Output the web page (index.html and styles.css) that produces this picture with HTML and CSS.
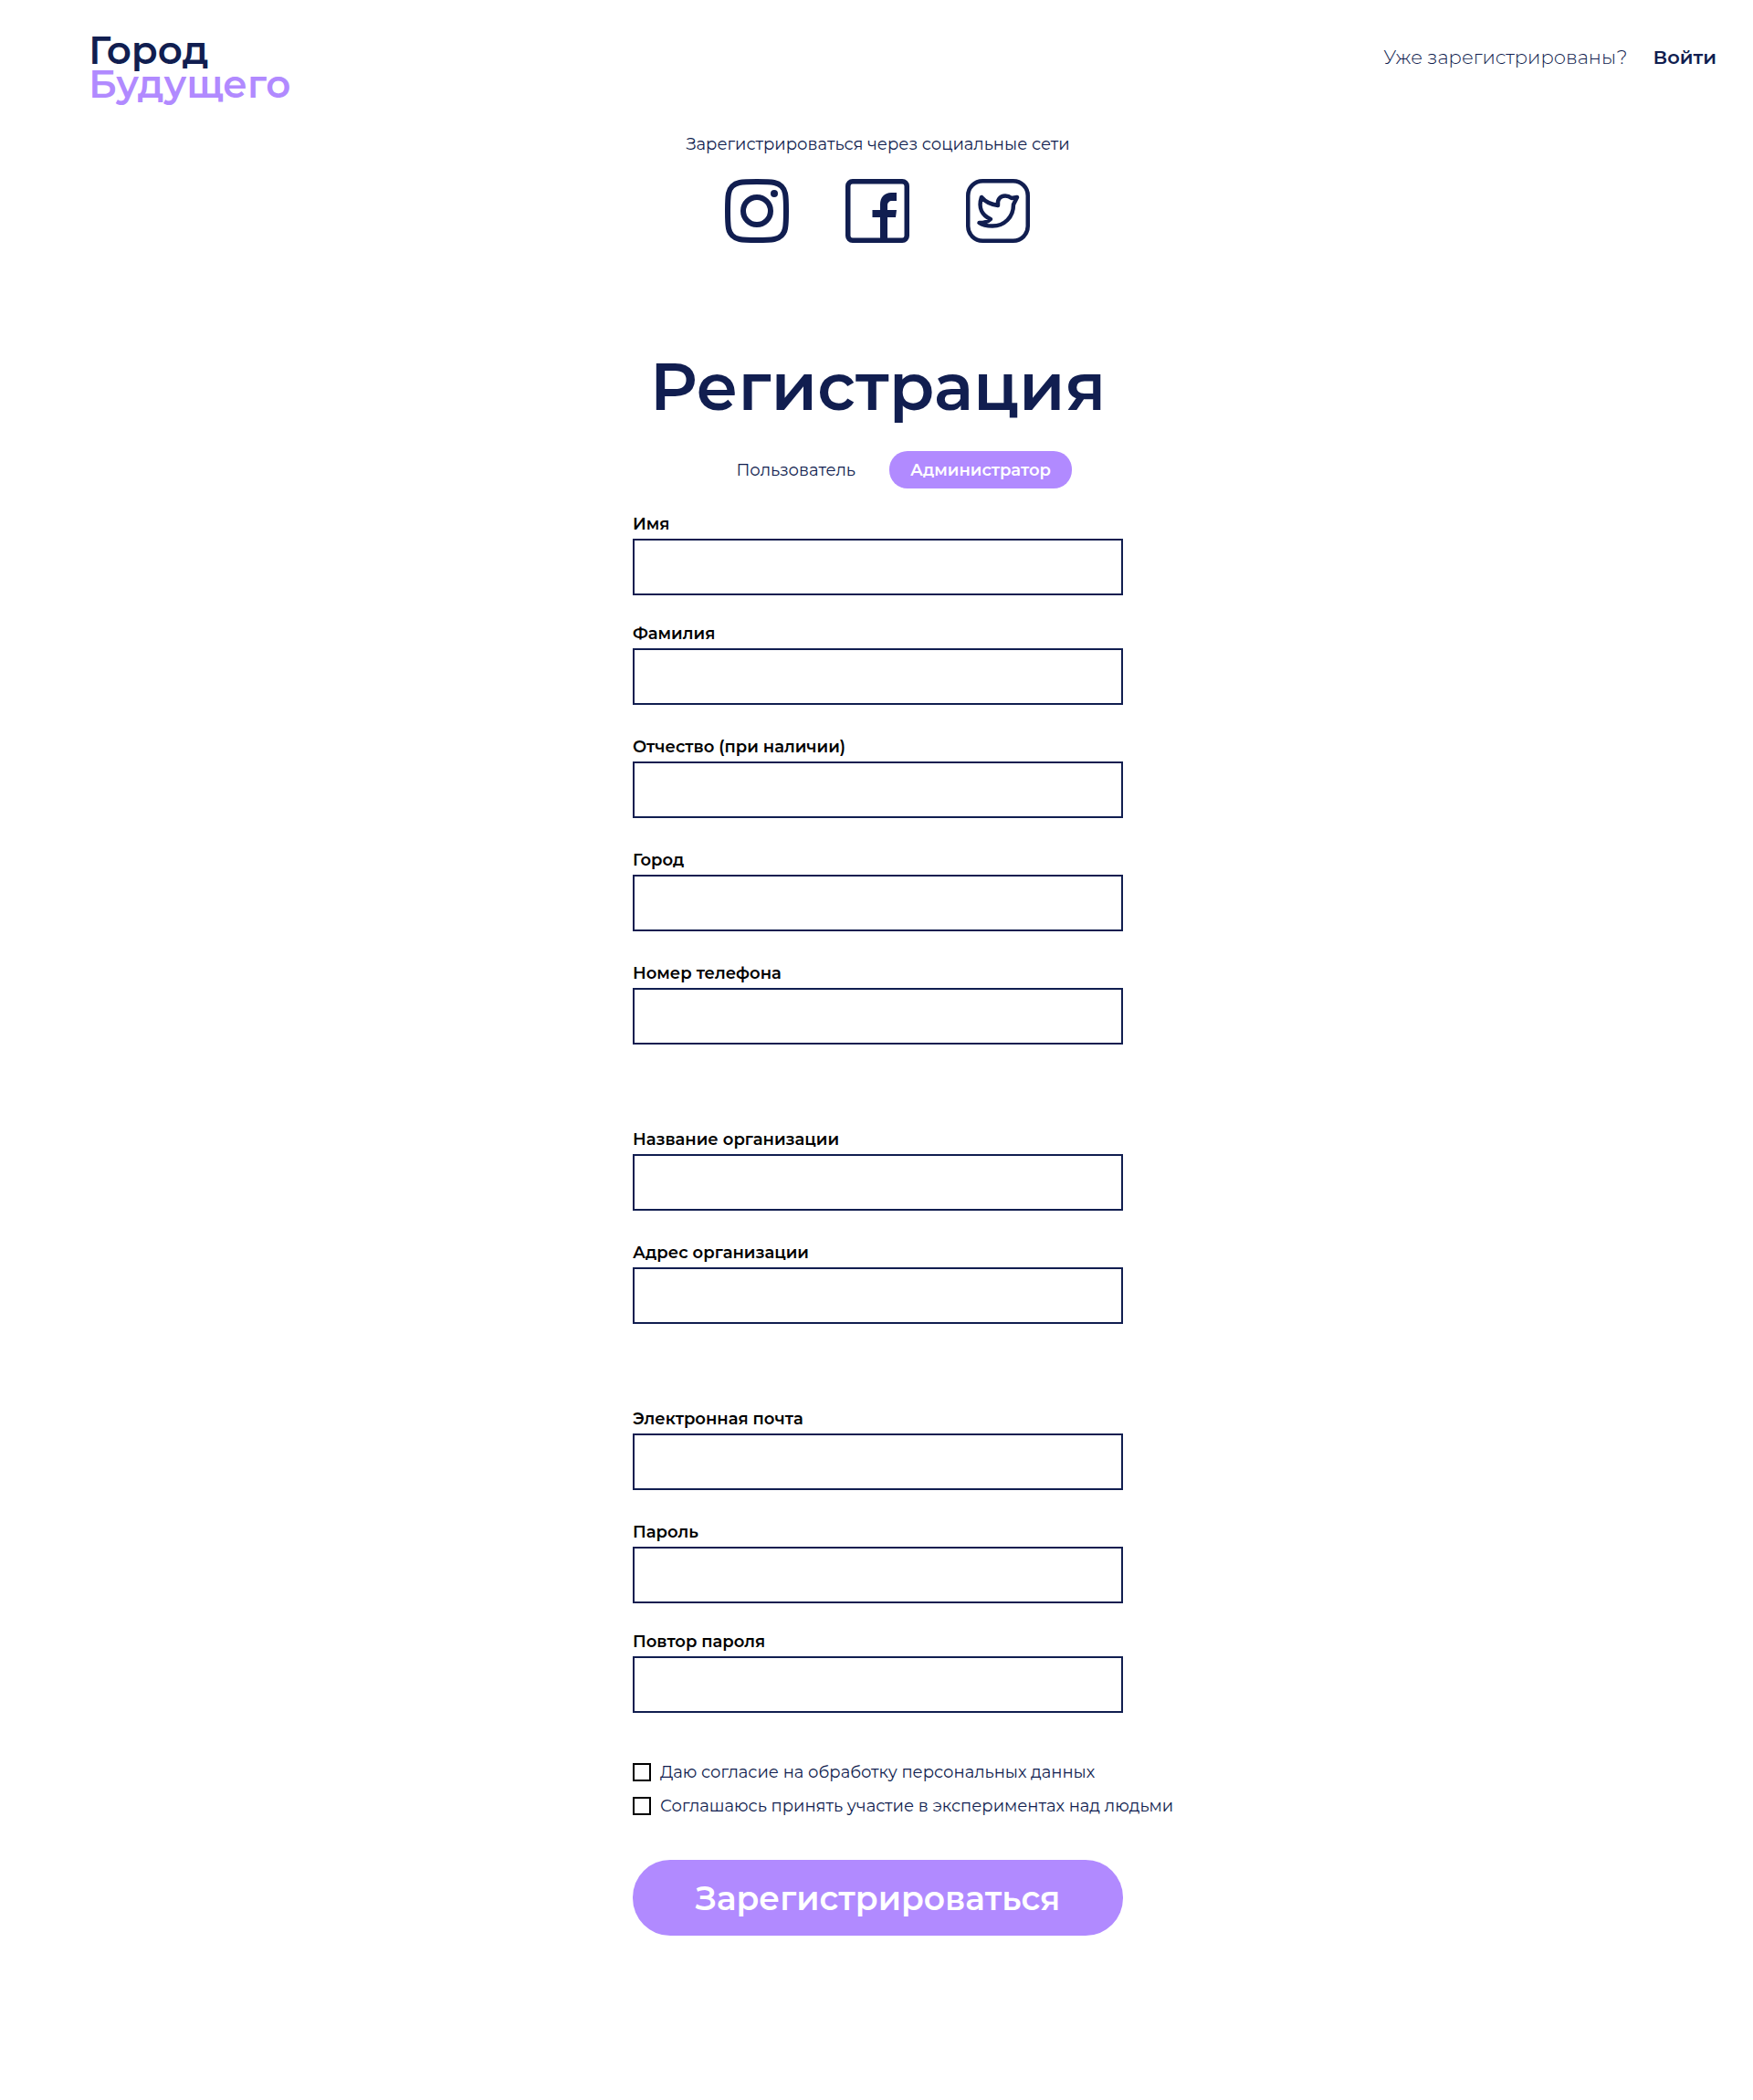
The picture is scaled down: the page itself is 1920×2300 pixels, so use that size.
FILE: index.html
```html
<!DOCTYPE html>
<html lang="ru">
<head>
  <meta charset="utf-8">
  <meta name="viewport" content="width=device-width, initial-scale=1">
  <title>Регистрация — Город Будущего</title>
  <link rel="stylesheet" href="styles.css">
</head>
<body>
  <header class="header">
    <a class="logo" href="#"><span class="logo-top">Город</span><span class="logo-bottom">Будущего</span></a>
    <div class="login">
      <span class="login-hint">Уже зарегистрированы?</span>
      <a class="login-link" href="#">Войти</a>
    </div>
  </header>

  <main class="main">
    <section class="social">
      <p class="social-text">Зарегистрироваться через социальные сети</p>
      <div class="social-links">
        <a class="social-link" href="#" aria-label="Instagram">
          <svg viewBox="0 0 70 70" fill="none" stroke="currentColor" stroke-width="6">
            <path d="M35 3C54 3 58 4 62 8S67 16 67 35 66 58 62 62 54 67 35 67 12 66 8 62 3 54 3 35 4 12 8 8 16 3 35 3Z"/>
            <circle cx="35" cy="35" r="15"/>
            <circle cx="54" cy="16" r="4" fill="currentColor" stroke="none"/>
          </svg>
        </a>
        <a class="social-link" href="#" aria-label="Facebook">
          <svg viewBox="0 0 70 70" fill="none">
            <rect x="2.75" y="2.75" width="64.5" height="64.5" rx="5" stroke="currentColor" stroke-width="5.5"/>
            <path d="M38 67V42H29.500V34H38V28C38 20 43 15 50 15H56V24H51C48 24 46 26 46 29V34H56L55 42H46V67Z" fill="currentColor"/>
          </svg>
        </a>
        <a class="social-link" href="#" aria-label="Twitter">
          <svg viewBox="0 0 70 70" fill="none" stroke="currentColor" stroke-width="4.500" stroke-linejoin="round" stroke-linecap="round">
            <rect x="2.250" y="2.250" width="65.500" height="65.500" rx="16"/>
            <path d="M17 20C22 26 28 28 35 29C34 23 37 18.500 43 18.500C46 18.500 48 19.500 50 21L56 20L52 28C52 42 42 51.500 29 51.500C24 51.500 18 50.500 14.500 48C20 48 24 47 27 44C18 40 13 32 17 20Z"/>
          </svg>
        </a>
      </div>
    </section>

    <h1 class="title">Регистрация</h1>

    <form class="form">
      <div class="tabs">
        <button class="tab" type="button">Пользователь</button>
        <button class="tab tab-active" type="button">Администратор</button>
      </div>

      <div class="group">
        <div class="field field-close"><label for="name">Имя</label><input id="name" type="text"></div>
        <div class="field"><label for="surname">Фамилия</label><input id="surname" type="text"></div>
        <div class="field"><label for="patronymic">Отчество (при наличии)</label><input id="patronymic" type="text"></div>
        <div class="field"><label for="city">Город</label><input id="city" type="text"></div>
        <div class="field"><label for="phone">Номер телефона</label><input id="phone" type="tel"></div>
      </div>

      <div class="group">
        <div class="field"><label for="org">Название организации</label><input id="org" type="text"></div>
        <div class="field"><label for="address">Адрес организации</label><input id="address" type="text"></div>
      </div>

      <div class="group">
        <div class="field"><label for="email">Электронная почта</label><input id="email" type="email"></div>
        <div class="field field-close"><label for="password">Пароль</label><input id="password" type="password"></div>
        <div class="field"><label for="repeat">Повтор пароля</label><input id="repeat" type="password"></div>
      </div>

      <div class="consents">
        <label class="consent"><input type="checkbox"><span>Даю согласие на обработку персональных данных</span></label>
        <label class="consent"><input type="checkbox"><span>Соглашаюсь принять участие в экспериментах над людьми</span></label>
      </div>

      <button class="submit" type="submit">Зарегистрироваться</button>
    </form>
  </main>
</body>
</html>
```
FILE: styles.css
```css
:root {
  --navy: #111e50;
  --purple: #b18aff;
}

* {
  box-sizing: border-box;
}

body {
  margin: 0;
  background: #fff;
  color: var(--navy);
  font-family: Montserrat, Inter, sans-serif;
  font-size: 18px;
  line-height: 24px;
}

a {
  color: inherit;
  text-decoration: none;
}

button {
  font: inherit;
  color: inherit;
  border: 0;
  padding: 0;
  background: none;
  cursor: pointer;
}

.header {
  display: flex;
  justify-content: space-between;
  align-items: flex-start;
  padding: 37px 40px 0 97px;
}

.logo {
  display: flex;
  flex-direction: column;
  font-size: 42px;
  line-height: 37px;
  font-weight: 600;
}

.logo-bottom {
  color: var(--purple);
}

.login {
  display: flex;
  gap: 28px;
  padding-top: 14px;
  font-size: 21px;
}

.login-hint {
  font-weight: 300;
}

.login-link {
  font-weight: 600;
}

.main {
  display: flex;
  flex-direction: column;
  align-items: center;
  padding: 35px 0 180px 3px;
}

.social {
  display: flex;
  flex-direction: column;
  align-items: center;
  gap: 26px;
}

.social-text {
  margin: 0;
}

.social-links {
  display: flex;
  gap: 62px;
}

.social-link,
.social-link svg {
  display: block;
  width: 70px;
  height: 70px;
}

.title {
  margin: 112px 0 26px;
  font-size: 72px;
  line-height: 90px;
  font-weight: 600;
}

.form {
  width: 537px;
  max-width: 100%;
}

.tabs {
  display: flex;
  justify-content: flex-end;
  gap: 37px;
  padding-right: 56px;
  margin-bottom: 27px;
}

.tab-active {
  width: 200px;
  height: 41px;
  border-radius: 20px;
  background: var(--purple);
  color: #fff;
  font-weight: 600;
}

.group {
  margin-bottom: 92px;
}

.field {
  display: flex;
  flex-direction: column;
  gap: 4px;
  margin-bottom: 34px;
}

.field-close {
  margin-bottom: 30px;
}

.field:last-child {
  margin-bottom: 0;
}

.field label {
  color: #000;
  font-weight: 600;
}

.field input {
  width: 100%;
  height: 62px;
  padding: 0 16px;
  border: 2px solid var(--navy);
  border-radius: 0;
  background: #fff;
  color: inherit;
  font: inherit;
}

.group:nth-last-of-type(2) {
  margin-bottom: 53px;
}

.consents {
  display: flex;
  flex-direction: column;
  gap: 13px;
  margin-bottom: 47px;
}

.consent {
  display: flex;
  align-items: center;
  gap: 10px;
  white-space: nowrap;
}

.consent input {
  appearance: none;
  flex: none;
  width: 20px;
  height: 20px;
  margin: 0;
  border: 2px solid #000;
}

.consent input:checked {
  background: var(--navy);
}

.submit {
  width: 100%;
  height: 83px;
  border-radius: 41px;
  background: var(--purple);
  color: #fff;
  font-size: 36px;
  font-weight: 600;
}
```
